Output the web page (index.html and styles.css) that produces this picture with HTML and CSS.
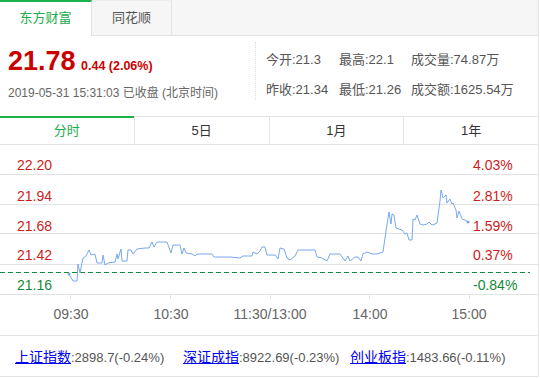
FILE: index.html
```html
<!DOCTYPE html>
<html lang="zh">
<head>
    <meta charset="UTF-8">
    <title>行情</title>
    <link rel="stylesheet" href="styles.css">
</head>
<body>

<div class="wrap">
    <div class="src-tabs">
        <a class="src-tab active">东方财富</a>
        <a class="src-tab">同花顺</a>
        <div class="src-rest"></div>
    </div>

    <div class="quote">
        <div class="quote-main">
            <div class="price-row">
                <span class="price">21.78</span>
                <span class="change">0.44 (2.06%)</span>
            </div>
            <div class="time">2019-05-31 15:31:03 已收盘 (北京时间)</div>
        </div>
        <div class="quote-stats">
            <span>今开:21.3</span><span>最高:22.1</span><span>成交量:74.87万</span>
            <span>昨收:21.34</span><span>最低:21.26</span><span>成交额:1625.54万</span>
        </div>
    </div>

    <div class="range-tabs">
        <a class="range-tab active">分时</a>
        <a class="range-tab">5日</a>
        <a class="range-tab">1月</a>
        <a class="range-tab">1年</a>
    </div>

    <!-- 分时图 -->
    <svg class="chart" viewBox="0 144 538 190" width="538" height="190">
        <g class="grid">
            <line x1="0" y1="173.5" x2="538" y2="173.5"/>
            <line x1="0" y1="203.5" x2="538" y2="203.5"/>
            <line x1="0" y1="232.5" x2="538" y2="232.5"/>
            <line x1="0" y1="263.5" x2="538" y2="263.5"/>
            <line x1="0" y1="293.5" x2="538" y2="293.5"/>
            <line x1="70.5" y1="293" x2="70.5" y2="298"/>
            <line x1="170.5" y1="293" x2="170.5" y2="298"/>
            <line x1="270.5" y1="293" x2="270.5" y2="298"/>
            <line x1="369.5" y1="293" x2="369.5" y2="298"/>
            <line x1="469.5" y1="293" x2="469.5" y2="298"/>
        </g>
        <line class="base" x1="0" y1="271.5" x2="530" y2="271.5"/>

        <g class="up">
            <text x="17" y="169">22.20</text>
            <text x="17" y="200">21.94</text>
            <text x="17" y="230">21.68</text>
            <text x="17" y="259">21.42</text>
            <text x="473" y="169">4.03%</text>
            <text x="473" y="200">2.81%</text>
            <text x="473" y="230">1.59%</text>
            <text x="473" y="259">0.37%</text>
        </g>
        <g class="down">
            <text x="17" y="289">21.16</text>
            <text x="473" y="289">-0.84%</text>
        </g>
        <g class="axis">
            <text x="71" y="318">09:30</text>
            <text x="171" y="318">10:30</text>
            <text x="270" y="318">11:30/13:00</text>
            <text x="370" y="318">14:00</text>
            <text x="469" y="318">15:00</text>
        </g>

        <polyline class="line" points="69,273 73,280 77,280 78,263 80,272 82,262 83,257 86,255 89,249 91,254 95,253 97,262 102,262 103,254 105,264 108,262 115,261 117,253 118,258 121,248 122,260 127,260 128,249 131,249 133,253 137,248 145,247 149,247 152,241 154,246 157,241 167,241 171,252 173,244 180,244 182,253 184,247 186,252 192,253 195,255 197,253 212,253 214,256 220,256 230,256 240,257 243,255 252,255 253,251 257,253 260,250 262,246 265,246 267,254 275,254 278,258 280,247 284,248 287,257 290,259 295,255 298,249 315,249 317,256 322,257 327,260 330,253 340,253 345,260 348,255 350,260 355,256 358,256 361,260 363,253 367,251 372,253 377,253 383,251 386,230 389,211 391,223 392,213 394,214 396,227 402,229 405,233 407,232 409,239 412,239 413,218 415,219 417,214 420,223 423,224 427,223 429,221 432,224 435,223 437,222 440,200 441,189 443,197 446,194 447,202 450,198 452,203 453,202 456,209 457,217 459,210 462,218 465,219 468,221"/>
        <circle class="dot" cx="69" cy="273" r="1.5"/>
        <circle class="dot" cx="468" cy="221" r="1.5"/>
    </svg>

    <div class="indices">
        <div class="index"><a href="#">上证指数</a>:2898.7(-0.24%)</div>
        <div class="index"><a href="#">深证成指</a>:8922.69(-0.23%)</div>
        <div class="index"><a href="#">创业板指</a>:1483.66(-0.11%)</div>
    </div>
</div>

</body>
</html>
```

FILE: styles.css
```css
body {
    margin: 0;
    background-color: #fff;
    font-family: "Liberation Sans", Arial, "Noto Sans CJK SC", sans-serif;
    color: #555;
}
.wrap {
    width: 538px;
    border-right: 1px solid #e5e5e5;
    border-bottom: 1px solid #e5e5e5;
}

/* 数据来源 */
.src-tabs {
    display: flex;
    height: 35px;
    background-color: #f6f6f6;
    border-bottom: 1px solid #e3e3e3;
}
.src-tab {
    width: 80px;
    text-align: center;
    font-size: 13px;
    color: #555;
    border-right: 1px solid #e3e3e3;
    border-top: 1px solid #eee;
    box-sizing: border-box;
    line-height: 33px;
}
.src-tab.active {
    width: 92px;
    height: 36px;
    background-color: #fff;
    color: #1aab4b;
    border-top: 2px solid #1cb24b;
    border-right: 1px solid #e3e3e3;
    line-height: 32px;
}
.src-rest {
    flex: 1;
}

/* 报价 */
.quote {
    display: flex;
    height: 80px;
}
.quote-main {
    width: 255px;
    padding: 10px 0 0 8px;
    box-sizing: border-box;
}
.price-row {
    height: 30px;
    line-height: 30px;
    white-space: nowrap;
}
.price {
    font-size: 27px;
    font-weight: bold;
    color: #cc0000;
}
.change {
    font-size: 12.5px;
    font-weight: bold;
    color: #cc0000;
    margin-left: 1px;
}
.time {
    margin-top: 7px;
    font-size: 12px;
    color: #666;
}
.quote-stats {
    margin-top: 6px;
    height: 58px;
    border-left: 1px dotted #ddd;
    padding: 10px 0 0 10px;
    box-sizing: border-box;
    display: grid;
    grid-template-columns: 73px 72px auto;
    row-gap: 14px;
    align-content: start;
    font-size: 13px;
    line-height: 16px;
    color: #555;
    white-space: nowrap;
}

/* 周期 */
.range-tabs {
    display: flex;
    height: 27px;
    border-top: 1px solid #e5e5e5;
    border-bottom: 1px solid #e5e5e5;
}
.range-tab {
    flex: 1;
    text-align: center;
    font-size: 13px;
    line-height: 27px;
    color: #333;
    border-left: 1px solid #e5e5e5;
}
.range-tab.active {
    border-left: none;
    color: #1aab4b;
    border-top: 2px solid #1cb24b;
    margin-top: -1px;
    line-height: 26px;
}

/* 图表 */
.chart {
    display: block;
    border-bottom: 1px solid #e5e5e5;
}
.grid line {
    stroke: #e3e3e3;
    stroke-width: 1;
}
.base {
    stroke: #14893a;
    stroke-width: 1;
    stroke-dasharray: 5 3;
}
.chart text {
    font-family: "Liberation Sans", Arial, sans-serif;
    font-size: 14px;
}
.up text {
    fill: #d01c1c;
}
.down text {
    fill: #14893a;
}
.axis text {
    fill: #666;
    text-anchor: middle;
}
.line {
    fill: none;
    stroke: #78a8ee;
    stroke-width: 1;
    stroke-linejoin: round;
}
.dot {
    fill: #78a8ee;
}

/* 指数 */
.indices {
    display: grid;
    grid-template-columns: 168px 167px auto;
    height: 40px;
    padding-left: 15px;
    align-items: center;
    font-size: 13px;
    color: #555;
    white-space: nowrap;
}
.index a {
    font-size: 14px;
    color: #0000ee;
}
```
